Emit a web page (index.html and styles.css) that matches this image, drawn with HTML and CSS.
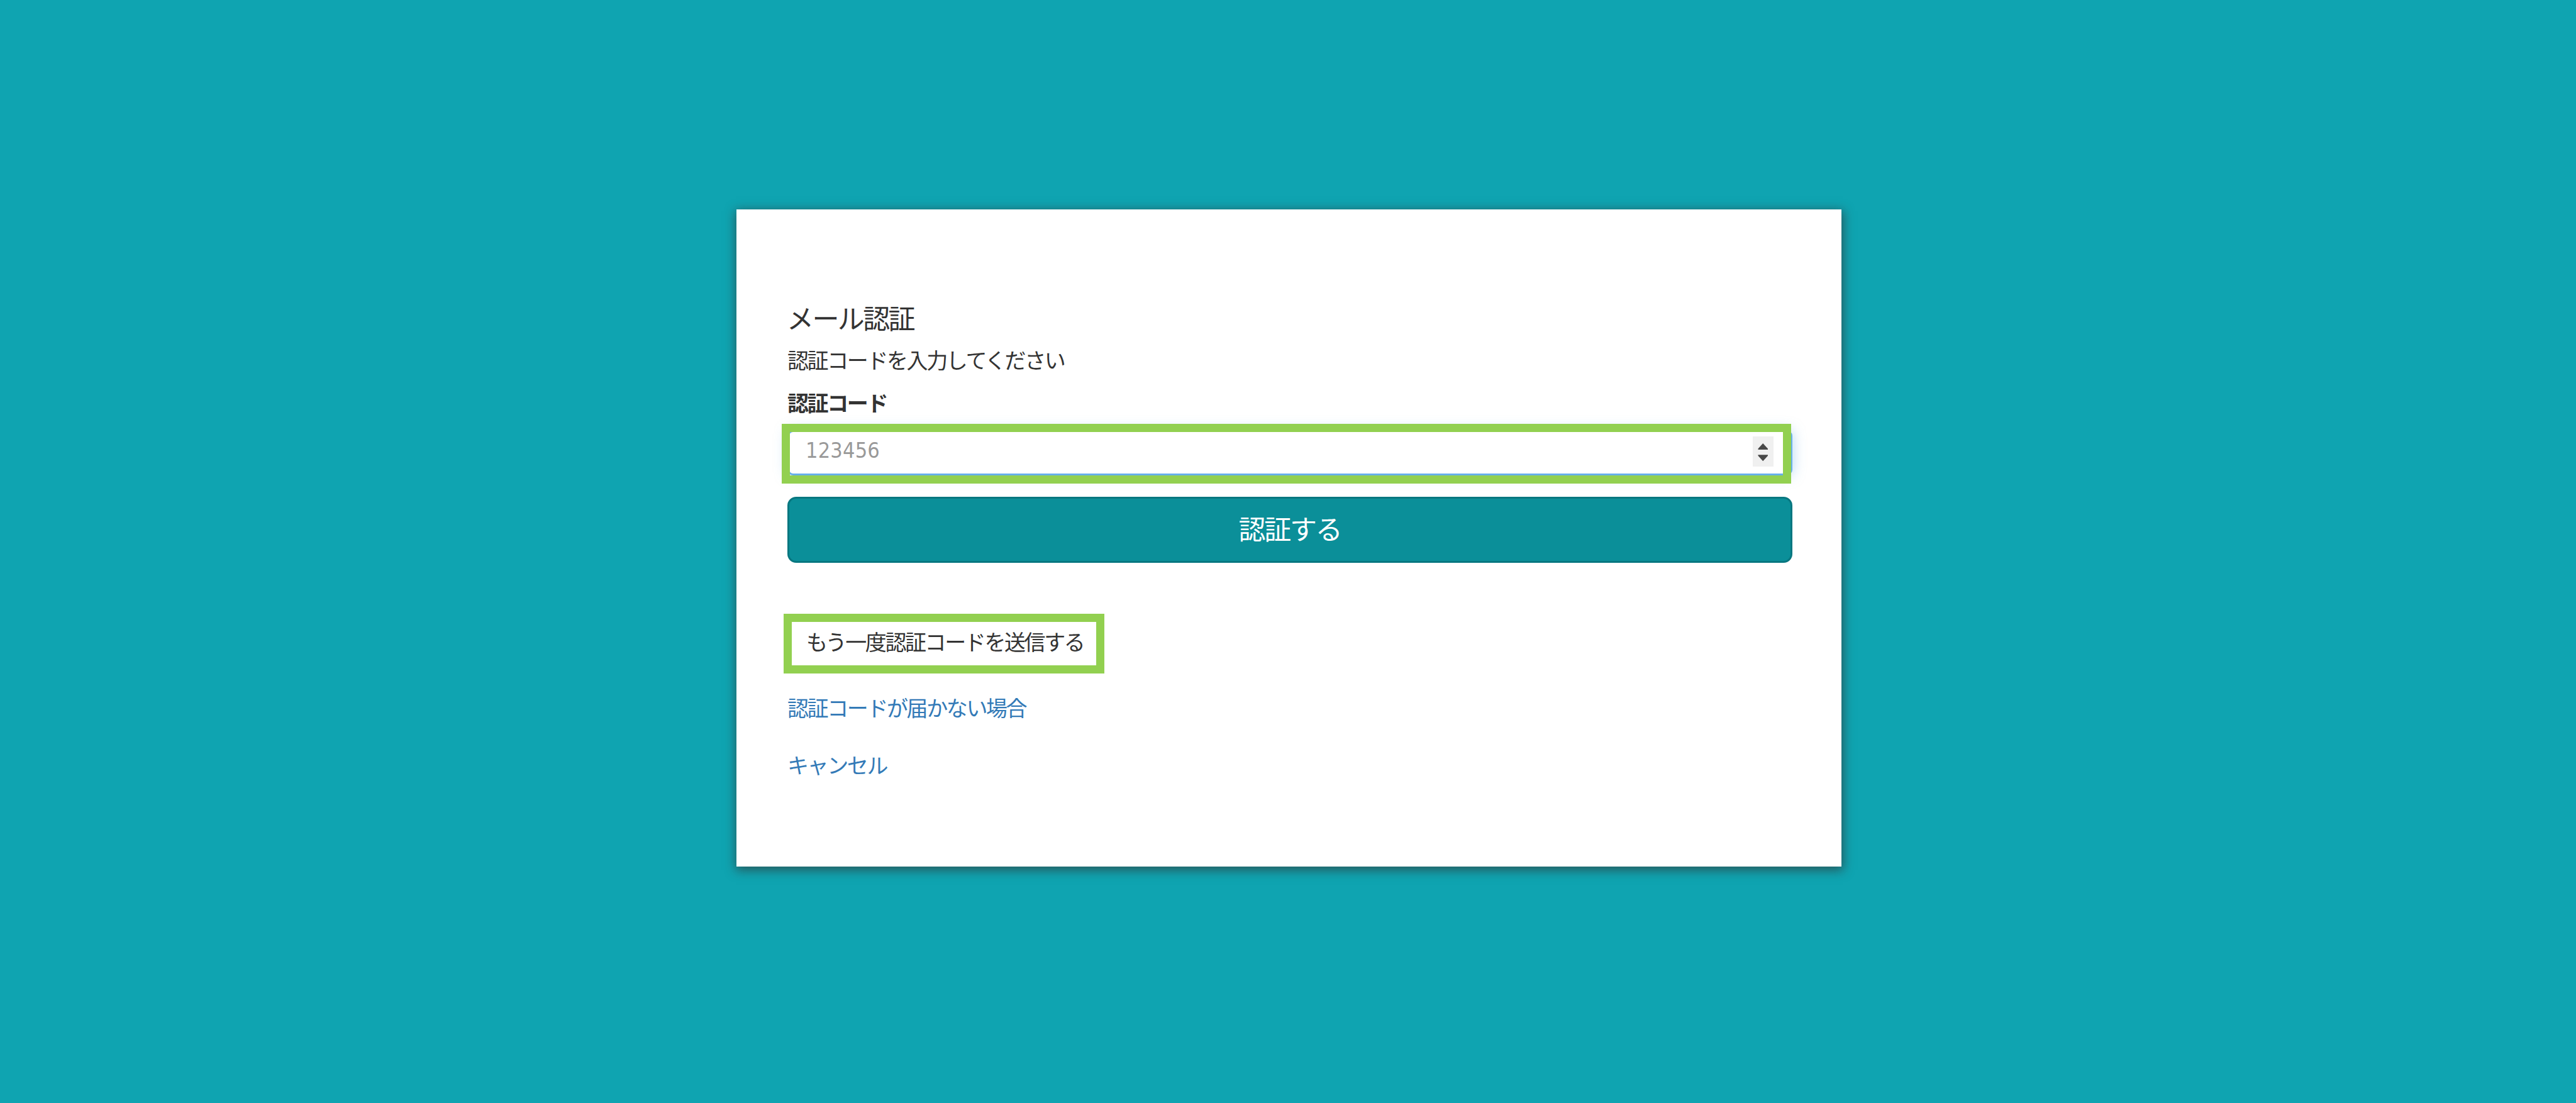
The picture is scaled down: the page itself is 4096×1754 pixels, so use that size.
FILE: index.html
```html
<!DOCTYPE html>
<html lang="ja">

<head>
    <meta charset="UTF-8">
    <meta name="viewport" content="width=device-width, initial-scale=1.0">
    <title>メール認証</title>
    <link rel="stylesheet" href="styles.css">
</head>

<body>
    <main class="auth-card">
        <h1 class="auth-title">メール認証</h1>
        <p class="auth-lead">認証コードを入力してください</p>
        <form class="auth-form">
            <label class="auth-label" for="auth-code">認証コード</label>
            <div class="code-field">
                <input type="text" inputmode="numeric" id="auth-code" class="code-input" placeholder="123456">
                <svg class="code-spinner" viewBox="0 0 33 48" aria-hidden="true">
                    <rect width="33" height="48" fill="#f0f0f0" />
                    <path d="M8.5 21v-1.5L16.2 11l7.8 8.5V21zM8.5 29.3v1.5l7.7 8.5 7.8-8.5v-1.5z" fill="#484848" />
                </svg>
                <span class="mark code-mark"></span>
            </div>
            <button type="submit" class="auth-btn">認証する</button>
        </form>
        <div class="resend">
            <button type="button" class="resend-btn">もう一度認証コードを送信する</button>
            <span class="mark resend-mark"></span>
        </div>
        <nav class="auth-links">
            <a href="#">認証コードが届かない場合</a>
            <a href="#">キャンセル</a>
        </nav>
    </main>
</body>

</html>
```
FILE: styles.css
```css
* {
    box-sizing: border-box;
}

body {
    margin: 0;
    padding-top: 333px;
    padding-left: 1171px;
    height: 1754px;
    overflow: hidden;
    background: #0fa4b1;
    color: #333;
    font-family: 'Noto Sans CJK JP', sans-serif;
    font-size: 34px;
    letter-spacing: -2.4px;
}

.auth-card {
    width: 1757px;
    height: 1045px;
    padding: 139px 78px 0 81px;
    background: #fff;
    box-shadow: 1px 4px 16px 2px rgba(51, 51, 51, 0.65);
}

.auth-title {
    margin: 0 0 0 -1px;
    font-size: 43px;
    font-weight: 400;
    line-height: 64px;
    letter-spacing: -2.6px;
}

.auth-lead {
    margin: 6px 0 8px;
    line-height: 60px;
}

.auth-form {
    display: flex;
    flex-direction: column;
}

.auth-label {
    font-weight: 700;
    line-height: 60px;
}

.code-field {
    position: relative;
    display: flex;
    margin-top: 14px;
}

.code-input {
    width: 100%;
    height: 72px;
    padding: 0 32px 9px 26px;
    border: 3px solid #66afe9;
    border-radius: 9px;
    outline: none;
    background: #fff;
    box-shadow: 0 0 20px rgba(102, 175, 233, 0.5);
    font-family: 'DejaVu Sans Condensed', 'DejaVu Sans', sans-serif;
    font-stretch: condensed;
    font-size: 34px;
    letter-spacing: 0.2px;
}

.code-input::placeholder {
    color: #999;
    opacity: 1;
}

.code-spinner {
    position: absolute;
    top: 10px;
    right: 30px;
    width: 33px;
    height: 48px;
}

/* green highlight frames */
.mark {
    position: absolute;
    border: 13px solid #92d050;
    pointer-events: none;
}

.code-mark {
    top: -10px;
    right: 2px;
    bottom: -13px;
    left: -9px;
}

.auth-btn {
    height: 105px;
    margin-top: 34px;
    padding: 0 0 8px;
    border: 3px solid #087780;
    border-radius: 14px;
    background: #0b8f99;
    color: #fff;
    font-family: inherit;
    font-size: 43px;
    letter-spacing: -2.3px;
}

.resend {
    position: relative;
    width: 510px;
    height: 95px;
    margin: 81px 0 0 -6px;
}

.resend-btn {
    width: 100%;
    height: 100%;
    padding: 0 0 8px 36px;
    border: 0;
    background: none;
    color: #333;
    font-family: inherit;
    font-size: 34px;
    letter-spacing: -2.4px;
    text-align: left;
    white-space: nowrap;
}

.resend-mark {
    inset: 0;
}

.auth-links {
    display: flex;
    flex-direction: column;
    align-items: flex-start;
    gap: 31px;
    margin-top: 24px;
}

.auth-links a {
    color: #337ab7;
    line-height: 60px;
    text-decoration: none;
}
```
